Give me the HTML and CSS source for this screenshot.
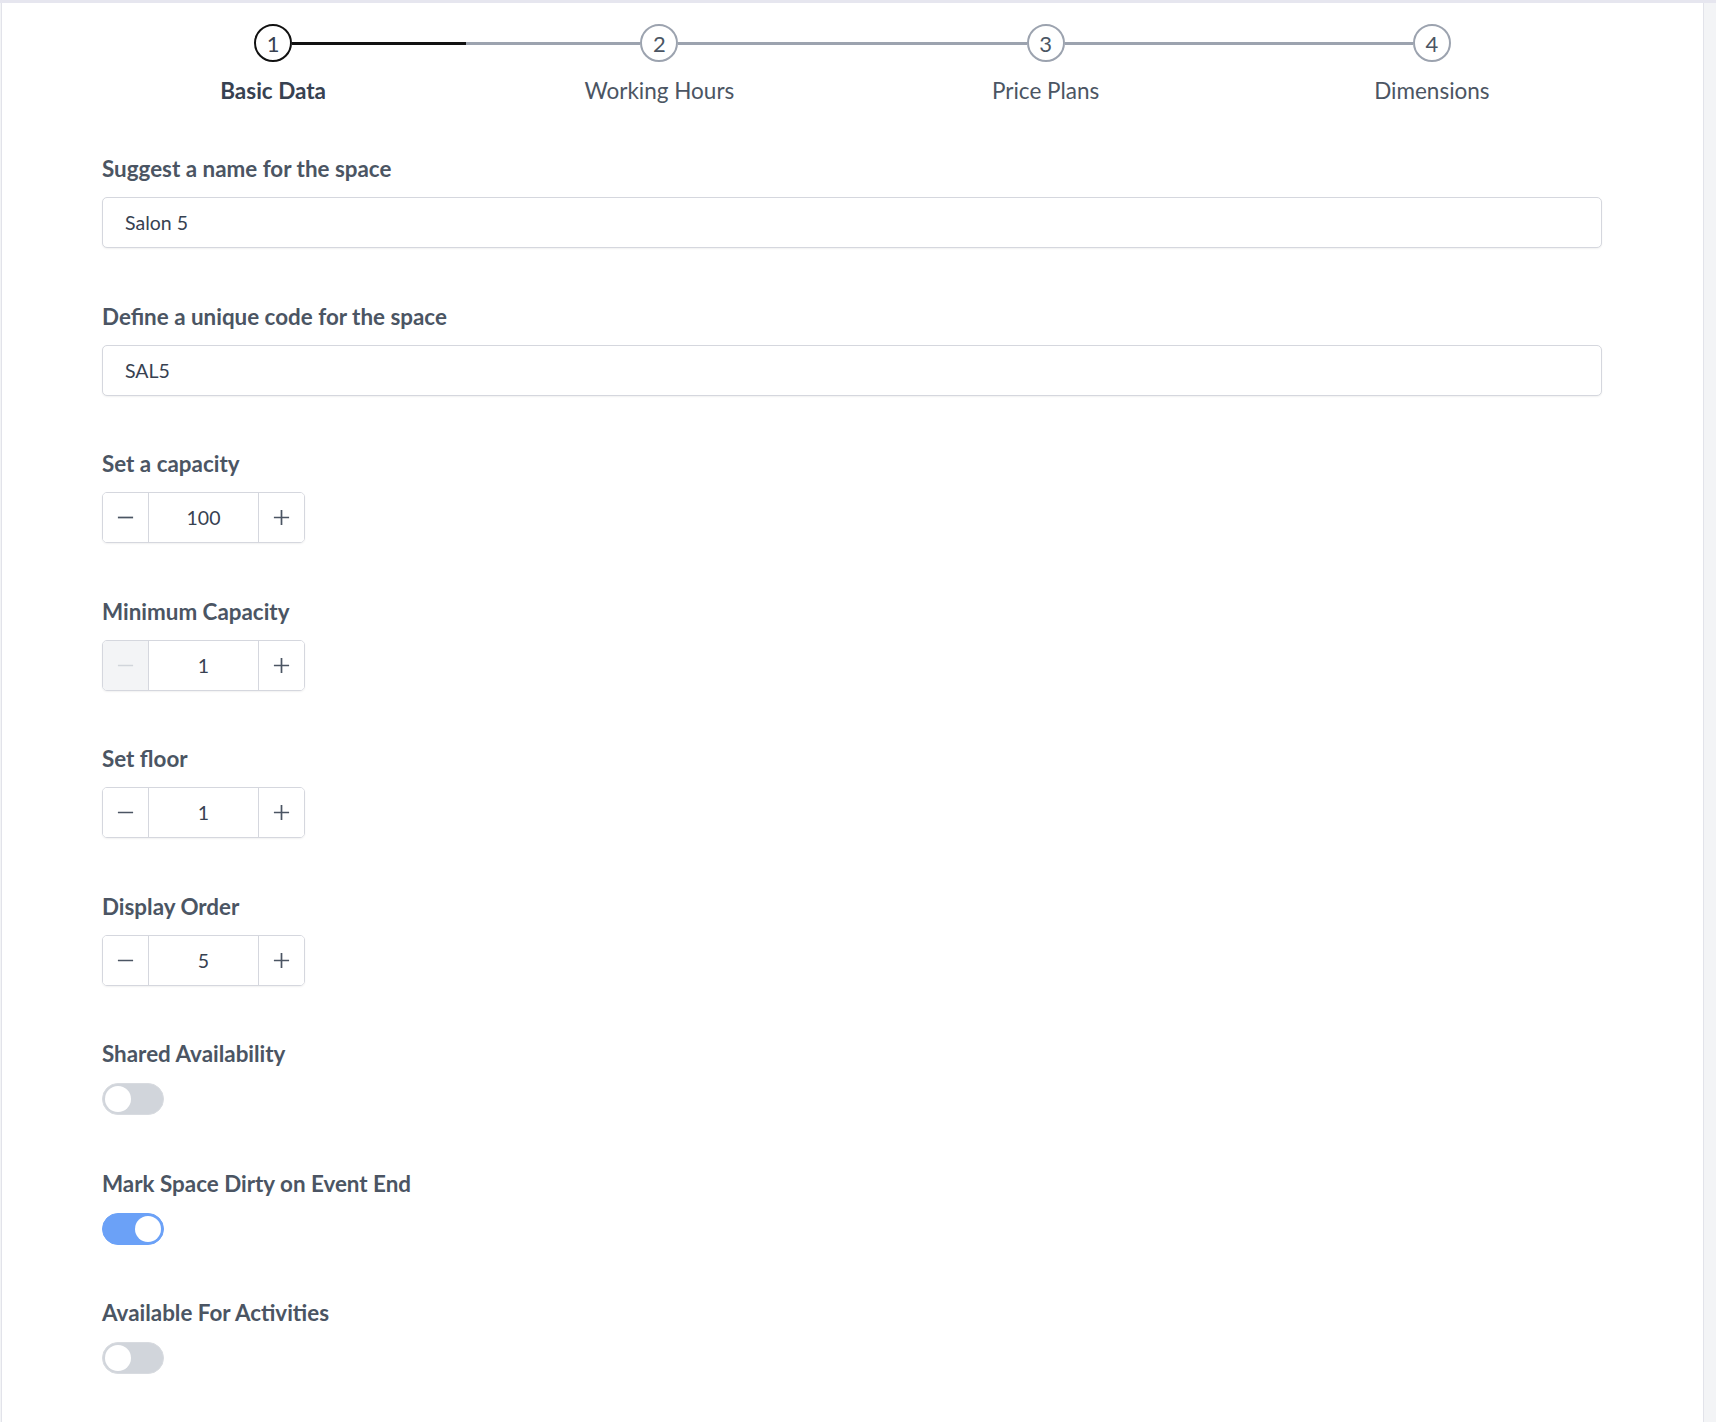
FILE: index.html
```html
<!DOCTYPE html>
<html>
<head>
    <meta charset="utf-8">
    <title>New Space</title>
    <link rel="stylesheet" href="styles.css">
</head>
<body>
    <div class="panel">
        <!-- Wizard steps -->
        <div class="steps">
            <div class="step active">
                <div class="step-track">
                    <span class="line none"></span>
                    <span class="circle">1</span>
                    <span class="line done"></span>
                </div>
                <div class="step-label">Basic Data</div>
            </div>
            <div class="step">
                <div class="step-track">
                    <span class="line"></span>
                    <span class="circle">2</span>
                    <span class="line"></span>
                </div>
                <div class="step-label">Working Hours</div>
            </div>
            <div class="step">
                <div class="step-track">
                    <span class="line"></span>
                    <span class="circle">3</span>
                    <span class="line"></span>
                </div>
                <div class="step-label">Price Plans</div>
            </div>
            <div class="step">
                <div class="step-track">
                    <span class="line"></span>
                    <span class="circle">4</span>
                    <span class="line none"></span>
                </div>
                <div class="step-label">Dimensions</div>
            </div>
        </div>

        <form class="space-form">
            <div class="field">
                <label for="name">Suggest a name for the space</label>
                <input type="text" id="name" class="text-input" value="Salon 5">
            </div>
            <div class="field">
                <label for="code">Define a unique code for the space</label>
                <input type="text" id="code" class="text-input" value="SAL5">
            </div>

            <div class="field">
                <label>Set a capacity</label>
                <div class="number">
                    <button type="button" class="num-btn"><svg viewBox="0 0 20 20"><path d="M2 10h16"/></svg></button>
                    <span class="num-value">100</span>
                    <button type="button" class="num-btn"><svg viewBox="0 0 20 20"><path d="M2 10h16M10 2v16"/></svg></button>
                </div>
            </div>
            <div class="field">
                <label>Minimum Capacity</label>
                <div class="number">
                    <button type="button" class="num-btn disabled"><svg viewBox="0 0 20 20"><path d="M2 10h16"/></svg></button>
                    <span class="num-value">1</span>
                    <button type="button" class="num-btn"><svg viewBox="0 0 20 20"><path d="M2 10h16M10 2v16"/></svg></button>
                </div>
            </div>
            <div class="field">
                <label>Set floor</label>
                <div class="number">
                    <button type="button" class="num-btn"><svg viewBox="0 0 20 20"><path d="M2 10h16"/></svg></button>
                    <span class="num-value">1</span>
                    <button type="button" class="num-btn"><svg viewBox="0 0 20 20"><path d="M2 10h16M10 2v16"/></svg></button>
                </div>
            </div>
            <div class="field">
                <label>Display Order</label>
                <div class="number">
                    <button type="button" class="num-btn"><svg viewBox="0 0 20 20"><path d="M2 10h16"/></svg></button>
                    <span class="num-value">5</span>
                    <button type="button" class="num-btn"><svg viewBox="0 0 20 20"><path d="M2 10h16M10 2v16"/></svg></button>
                </div>
            </div>

            <div class="field toggle-field">
                <label>Shared Availability</label>
                <span class="toggle"><span class="knob"></span></span>
            </div>
            <div class="field toggle-field">
                <label>Mark Space Dirty on Event End</label>
                <span class="toggle on"><span class="knob"></span></span>
            </div>
            <div class="field toggle-field">
                <label>Available For Activities</label>
                <span class="toggle"><span class="knob"></span></span>
            </div>
        </form>
    </div>
</body>
</html>
```

FILE: styles.css
```css
body {
    margin: 0;
    font-family: Lato, "Open Sans", Arial, sans-serif;
    background: #f3f4f6;
    border-top: 3px solid #e6e6ef;
}
.panel {
    width: 1703px;
    box-sizing: border-box;
    margin-left: 1px;
    min-height: 1419px;
    background: #fff;
    border-left: 1px solid #e2e3ea;
    border-right: 1px solid #e2e3ea;
    padding: 21px 0 40px;
}

/* steps */
.steps {
    display: grid;
    grid-template-columns: repeat(4, 1fr);
    margin: 0 78px;
}
.step-track {
    display: flex;
    align-items: center;
    height: 38px;
}
.line {
    flex: 1;
    height: 3px;
    background: #9ca3af;
}
.line.done {
    background: #111;
}
.line.none {
    background: transparent;
}
.circle {
    width: 38px;
    height: 38px;
    box-sizing: border-box;
    border: 2.5px solid #9ca3af;
    border-radius: 50%;
    display: flex;
    align-items: center;
    justify-content: center;
    font-size: 22px;
    color: #4b5563;
}
.step.active .circle {
    border-color: #111;
    color: #374151;
}
.step-label {
    margin-top: 15px;
    text-align: center;
    font-size: 22.5px;
    line-height: 28px;
    color: #4b5563;
}
.step.active .step-label {
    font-weight: bold;
    color: #374151;
}

/* form */
.space-form {
    margin: 50px 101px 0 100px;
}
.field {
    margin-bottom: 54.5px;
}
.field label {
    display: block;
    font-size: 22.4px;
    line-height: 28px;
    font-weight: bold;
    color: #4b5563;
    margin-bottom: 14px;
}
.toggle-field label {
    margin-bottom: 15px;
}
.text-input {
    display: block;
    width: 100%;
    height: 51px;
    box-sizing: border-box;
    padding: 0 22px;
    border: 1px solid #d5d7de;
    border-radius: 5px;
    box-shadow: 0 1px 2px rgba(0,0,0,0.06);
    font-family: inherit;
    font-size: 19.5px;
    color: #374151;
    outline: none;
}

.number {
    display: flex;
    width: 203px;
    height: 51px;
    box-sizing: border-box;
    border: 1px solid #d5d7de;
    border-radius: 5px;
    box-shadow: 0 1px 2px rgba(0,0,0,0.06);
    overflow: hidden;
}
.num-btn {
    width: 45px;
    border: none;
    background: #fff;
    padding: 0;
    display: flex;
    align-items: center;
    justify-content: center;
    cursor: pointer;
}
.num-btn svg {
    width: 19px;
    height: 19px;
    fill: none;
    stroke: #4b5563;
    stroke-width: 1.8;
}
.num-btn.disabled {
    background: #f3f4f6;
}
.num-btn.disabled svg {
    stroke: #d1d5db;
}
.num-value {
    flex: 1;
    display: flex;
    align-items: center;
    justify-content: center;
    border-left: 1px solid #d5d7de;
    border-right: 1px solid #d5d7de;
    font-size: 19.5px;
    color: #374151;
}

.toggle {
    display: flex;
    align-items: center;
    width: 62px;
    height: 32px;
    box-sizing: border-box;
    padding: 2px;
    border-radius: 16px;
    background: #d1d5db;
    border: 1px solid #d8dbe0;
}
.knob {
    width: 26px;
    height: 26px;
    border-radius: 50%;
    background: #fff;
}
.toggle.on {
    background: #6ba1f7;
    border-color: #6ba1f7;
    justify-content: flex-end;
}
```
